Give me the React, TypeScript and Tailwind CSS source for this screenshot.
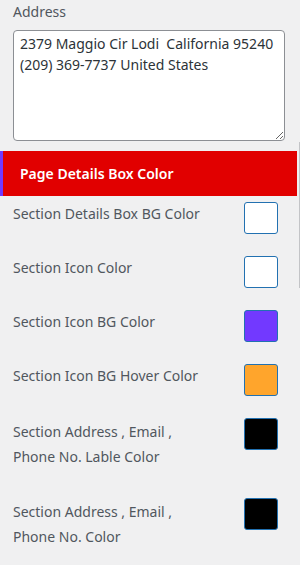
import React from "react";

const rows: { label: string[]; color: string }[] = [
  { label: ["Section Details Box BG Color"], color: "#ffffff" },
  { label: ["Section Icon Color"], color: "#ffffff" },
  { label: ["Section Icon BG Color"], color: "#7239ff" },
  { label: ["Section Icon BG Hover Color"], color: "#ffa52c" },
  { label: ["Section Address , Email ,", "Phone No. Lable Color"], color: "#000000" },
  { label: ["Section Address , Email ,", "Phone No. Color"], color: "#000000" },
];

export default function App() {
  return (
    <div
      className="relative w-[300px] h-[565px] overflow-hidden bg-[#f0f0f1] text-[14px] text-[#50575e]"
      style={{ fontFamily: '"Noto Sans", "Open Sans", sans-serif' }}
    >
      <div className="absolute right-0 top-[142px] h-[146px] w-px bg-[#c3c4c7]" />
      <div className="px-[13px]">
        <div className="leading-[24px]">Address</div>
        <textarea
          readOnly
          defaultValue={"2379 Maggio Cir Lodi  California 95240\n(209) 369-7737 United States"}
          className="mt-[6px] block w-[272px] h-[111px] rounded-[4px] border border-[#8c8f94] bg-white px-[6px] pt-[2px] text-[14px] leading-[21px] text-[#2c3338] outline-none"
          style={{ fontFamily: '"Noto Sans", "Open Sans", sans-serif' }}
        />
      </div>
      <div className="mt-[10px] w-[297px] h-[45px] bg-[#e10000] border-l-[3px] border-[#7239ff] flex items-center pl-[17px] text-white font-semibold text-[14px]">
        Page Details Box Color
      </div>
      <div className="mt-[6px] pl-[13px] pr-[22px]">
        {rows.map((r, i) => (
          <div key={i} className="flex items-start justify-between">
            <div className={r.label.length > 1 ? "leading-[25px] pt-[1px] pb-[29px]" : "leading-[24px] pb-[30px]"}>
              {r.label.map((l, j) => (
                <div key={j}>{l}</div>
              ))}
            </div>
            <div
              className="w-[34px] h-[32px] rounded-[3px] border border-[#2271b1]"
              style={{ backgroundColor: r.color }}
            />
          </div>
        ))}
      </div>
    </div>
  );
}
